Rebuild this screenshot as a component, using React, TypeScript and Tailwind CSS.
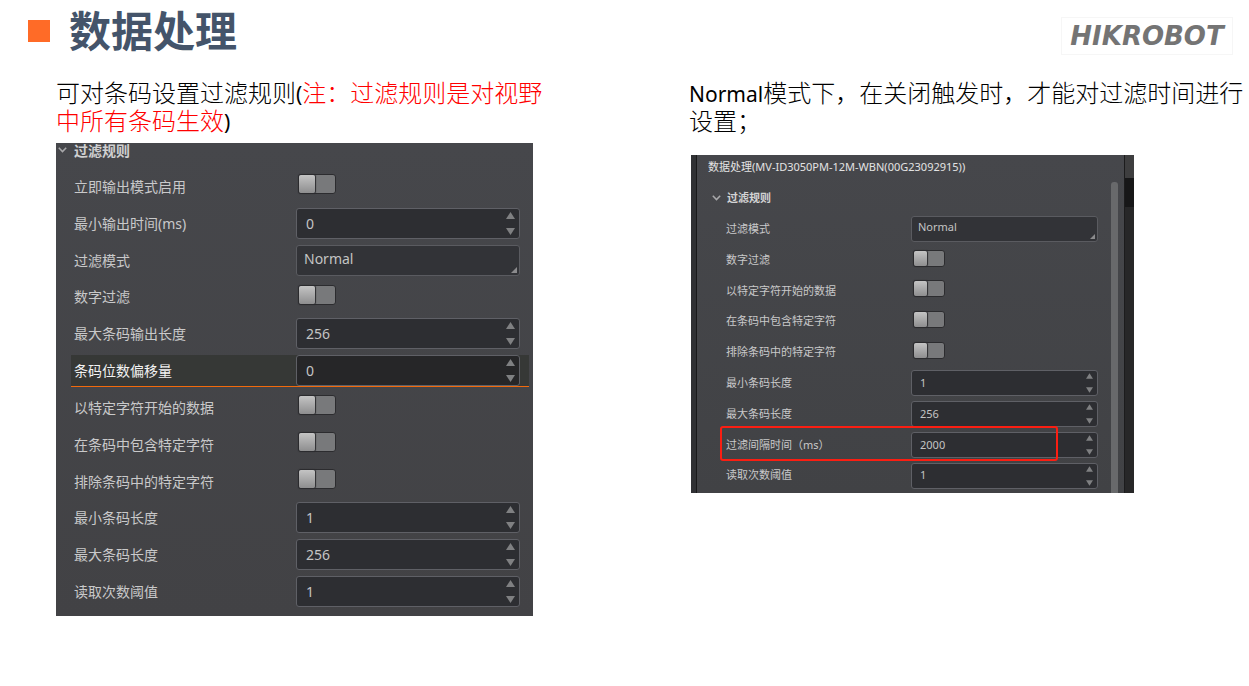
import React, { createContext, useContext, useId } from 'react';

type Row = {
  label: string;
  kind: 'toggle' | 'number' | 'select';
  value?: string;
  active?: boolean;
  marked?: boolean;
};

const leftRows: Row[] = [
  { label: '立即输出模式启用', kind: 'toggle' },
  { label: '最小输出时间(ms)', kind: 'number', value: '0' },
  { label: '过滤模式', kind: 'select', value: 'Normal' },
  { label: '数字过滤', kind: 'toggle' },
  { label: '最大条码输出长度', kind: 'number', value: '256' },
  { label: '条码位数偏移量', kind: 'number', value: '0', active: true },
  { label: '以特定字符开始的数据', kind: 'toggle' },
  { label: '在条码中包含特定字符', kind: 'toggle' },
  { label: '排除条码中的特定字符', kind: 'toggle' },
  { label: '最小条码长度', kind: 'number', value: '1' },
  { label: '最大条码长度', kind: 'number', value: '256' },
  { label: '读取次数阈值', kind: 'number', value: '1' },
];

const rightRows: Row[] = [
  { label: '过滤模式', kind: 'select', value: 'Normal' },
  { label: '数字过滤', kind: 'toggle' },
  { label: '以特定字符开始的数据', kind: 'toggle' },
  { label: '在条码中包含特定字符', kind: 'toggle' },
  { label: '排除条码中的特定字符', kind: 'toggle' },
  { label: '最小条码长度', kind: 'number', value: '1' },
  { label: '最大条码长度', kind: 'number', value: '256' },
  { label: '过滤间隔时间（ms）', kind: 'number', value: '2000', marked: true },
  { label: '读取次数阈值', kind: 'number', value: '1' },
];

const Compact = createContext(false);

function Chevron() {
  return (
    <svg viewBox="0 0 9 6" className="h-[6px] w-[9px] shrink-0" fill="none" stroke="#a9a9ab" strokeWidth="1.5" aria-hidden="true">
      <path d="M0.8 0.8 4.5 4.6 8.2 0.8" />
    </svg>
  );
}

function Toggle({ id }: { id: string }) {
  const compact = useContext(Compact);
  return (
    <input
      id={id}
      type="checkbox"
      role="switch"
      className={`flex appearance-none items-stretch rounded-[3px] border border-[#2c2c2f] bg-[#78797b] before:rounded-[2px] before:bg-linear-to-b before:from-[#c4c4c4] before:to-[#8e8e8f] before:shadow-[0_0_1px_1px_#2c2c2f] before:content-[''] ${
        compact ? 'mb-1 ml-[2px] h-[17px] w-8 before:w-[13px]' : 'mb-1 ml-[2px] h-5 w-[38px] before:w-4'
      }`}
    />
  );
}

function NumberField({ id, value, active }: { id: string; value?: string; active?: boolean }) {
  const compact = useContext(Compact);
  const arrow = compact ? 'h-[6px] w-[7px]' : 'h-[7px] w-[9px]';
  return (
    <div
      className={`flex min-w-0 flex-1 rounded-[3px] border border-[#5f6066] ${active ? 'bg-[#262628]' : 'bg-[#2d2e32]'} ${
        compact ? 'h-[26px]' : 'h-[31px]'
      }`}
    >
      <input
        id={id}
        type="text"
        inputMode="numeric"
        defaultValue={value}
        className={`min-w-0 flex-1 bg-transparent text-[#c4c4c4] outline-none ${compact ? 'pl-2' : 'pl-[9px]'}`}
      />
      <div className={`flex flex-col justify-between ${compact ? 'px-1 py-[2px]' : 'px-1 py-[3px]'}`}>
        <button type="button" aria-label="+" className="flex">
          <svg viewBox="0 0 9 7" className={arrow} fill="#7f8082" aria-hidden="true">
            <path d="M4.5 0 9 7H0z" />
          </svg>
        </button>
        <button type="button" aria-label="-" className="flex">
          <svg viewBox="0 0 9 7" className={arrow} fill="#7f8082" aria-hidden="true">
            <path d="M0 0h9L4.5 7z" />
          </svg>
        </button>
      </div>
    </div>
  );
}

function SelectField({ id, value }: { id: string; value?: string }) {
  const compact = useContext(Compact);
  return (
    <div className="relative min-w-0 flex-1">
      <select
        id={id}
        defaultValue={value}
        className={`block w-full appearance-none rounded-[3px] border border-[#5a5b60] bg-[#323337] text-[#c4c4c4] outline-none ${
          compact ? 'h-[26px] pb-1 pl-[6px]' : 'h-[31px] pb-1 pl-[7px]'
        }`}
      >
        <option>{value}</option>
      </select>
      <svg
        viewBox="0 0 7 7"
        className={`pointer-events-none absolute right-[3px] bottom-[3px] ${compact ? 'size-[5px]' : 'size-[6px]'}`}
        fill="#8b8b8d"
        aria-hidden="true"
      >
        <path d="M7 0v7H0z" />
      </svg>
    </div>
  );
}

function SettingRow({ row }: { row: Row }) {
  const compact = useContext(Compact);
  const id = useId();
  return (
    <div className="flex items-center">
      <div
        className={`relative flex min-w-0 flex-1 items-center ${compact ? 'h-7 pr-[13px] pl-[29px]' : 'h-8 pr-[9px] pl-[3px]'} ${
          row.active ? 'bg-[#363836]' : ''
        }`}
      >
        <label
          htmlFor={id}
          className={`shrink-0 ${compact ? 'w-[185px]' : 'w-[222px]'} ${row.active ? 'text-[#f2f2f2]' : 'text-[#c9c9ca]'}`}
        >
          {row.label}
        </label>
        {row.kind === 'toggle' && <Toggle id={id} />}
        {row.kind === 'number' && <NumberField id={id} value={row.value} active={row.active} />}
        {row.kind === 'select' && <SelectField id={id} value={row.value} />}
        {row.active && <div className="absolute inset-x-0 bottom-0 h-px bg-[#f26a0c]" />}
        {row.marked && (
          <div className="pointer-events-none absolute -top-[5px] right-[53px] -bottom-[2px] left-[23px] rounded-[3px] border-2 border-[#fb1e12]" />
        )}
      </div>
    </div>
  );
}

export default function App() {
  return (
    <main className="min-h-screen bg-white font-['Noto_Sans','Noto_Sans_CJK_SC',sans-serif]">
      <header className="flex items-start justify-between pr-4 pl-7">
        <div className="flex items-start gap-[19px]">
          <span className="mt-5 size-[22px] bg-[#ff6b27]" />
          <h1 className="font-['Noto_Sans_CJK_SC',sans-serif] text-[42px] leading-[58px] font-bold text-[#44546a]">数据处理</h1>
        </div>
        <div className="mt-[17px] flex h-[38px] w-[172px] items-center justify-center border border-[#f6f6f6] font-['DejaVu_Sans',sans-serif] text-[26px] font-bold text-[#747474] italic">
          HIKROBOT
        </div>
      </header>

      <div className="grid grid-cols-[633fr_560fr] items-start pt-[21px] pl-14">
        <section>
          <p className="font-[Lato,'Noto_Sans_CJK_SC',sans-serif] text-[24px] leading-[28px] font-light whitespace-nowrap text-black">
            可对条码设置过滤规则<span className="font-['Noto_Sans',sans-serif] text-[21px] leading-none font-normal">(</span>
            <span className="text-[#ff0000]">注：过滤规则是对视野<br />中所有条码生效</span>
            <span className="font-['Noto_Sans',sans-serif] text-[21px] leading-none font-normal">)</span>
          </p>
          <div className="mt-2 w-full max-w-[477px] bg-linear-to-b from-[#46474b] to-[#424245] pr-1 pb-[6px] text-[14px]">
            <h2 className="flex h-[25px] items-start gap-[7px] pl-[2px] leading-[16px] font-bold text-[#d0d0d1]">
              <span className="flex h-[14px] items-center"><Chevron /></span>
              过滤规则
            </h2>
            <div className="grid h-[442px] auto-rows-fr grid-cols-1 pl-[15px]">
              {leftRows.map((row) => (
                <SettingRow key={row.label} row={row} />
              ))}
            </div>
          </div>
        </section>

        <section>
          <p className="font-[Lato,'Noto_Sans_CJK_SC',sans-serif] text-[24px] leading-[28px] font-light whitespace-nowrap text-black">
            <span className="font-['Noto_Sans',sans-serif] text-[21px] leading-none font-normal">Normal</span>模式下，在关闭触发时，才能对过滤时间进行<br />设置；
          </p>
          <Compact.Provider value={true}>
            <div className="mt-5 ml-[2px] flex w-full max-w-[443px] text-[11px]">
              <div className="w-[6px] border-r border-[#19191a] bg-[#303134]" />
              <div className="min-w-0 flex-1 bg-linear-to-b from-[#46474b] to-[#414245]">
                <h2 className="h-[27px] pl-[11px] text-[11px] leading-[24px] text-[#e3e3e3]">
                  数据处理(MV-ID3050PM-12M-WBN(00G23092915))
                </h2>
                <div className="flex">
                  <div className="min-w-0 flex-1 pb-[2px]">
                    <h3 className="flex h-8 items-center gap-[6px] pl-[15px] font-bold text-[#d3d3d4]">
                      <Chevron />
                      过滤规则
                    </h3>
                    <div className="grid h-[277px] auto-rows-fr grid-cols-1">
                      {rightRows.map((row) => (
                        <SettingRow key={row.label} row={row} />
                      ))}
                    </div>
                  </div>
                  <div className="mr-[6px] w-[7px] rounded-t-[3px] bg-[#68696b]" />
                </div>
              </div>
              <div className="flex w-[10px] flex-col border-l border-[#1c1c1d] bg-[#272728]">
                <div className="h-[23px] bg-[#3e3e3f]" />
                <div className="h-[29px] bg-[#171718]" />
              </div>
            </div>
          </Compact.Provider>
        </section>
      </div>
    </main>
  );
}
